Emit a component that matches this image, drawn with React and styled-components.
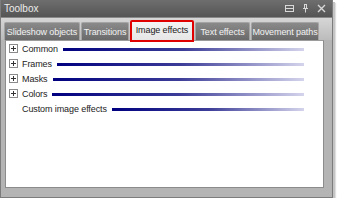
import React from "react";
import styled, { createGlobalStyle } from "styled-components";

const Global = createGlobalStyle`
  html, body { margin: 0; padding: 0; background: #ffffff; }
  body { font-family: "Liberation Sans", Arial, sans-serif; }
`;

const Window = styled.div`
  width: 333px;
  height: 198px;
  box-sizing: border-box;
  background: #a8a8a8;
  border: 1px solid #7c7c7c;
  border-top: none;
  box-shadow: 2px 2px 0 #c4c4c4, 3px 3px 1px #e0e0e0;
  display: flex;
  flex-direction: column;
`;

const TitleBar = styled.div`
  height: 17px;
  flex: none;
  display: flex;
  align-items: center;
  justify-content: space-between;
  padding: 0 6px 0 3px;
  background: linear-gradient(#6e6e6e, #555555);
  color: #ececec;
  font-size: 10px;
  border-bottom: 1px solid #8a8a8a;
`;

const TitleButtons = styled.div`
  display: flex;
  gap: 7px;
  align-items: center;
`;

const TabStrip = styled.div`
  display: flex;
  align-items: flex-end;
  gap: 1px;
  height: 22px;
  flex: none;
  padding: 0 0 0 3px;
  background: linear-gradient(#d6d6d6, #bcbcbc);
`;

const Tab = styled.div`
  box-sizing: border-box;
  width: ${(p) => p.$w}px;
  height: ${(p) => (p.$active ? 22 : 18)}px;
  display: flex;
  align-items: center;
  justify-content: center;
  font-size: 9px;
  letter-spacing: -0.1px;
  white-space: nowrap;
  color: ${(p) => (p.$active ? "#202020" : "#f2f2f2")};
  background: ${(p) =>
    p.$active ? "linear-gradient(#f4f4f4, #e6e6e6)" : "linear-gradient(#8a8a8a, #6a6a6a)"};
  border: ${(p) => (p.$active ? "2px solid #e00000" : "1px solid #a4a4a4")};
  border-bottom: ${(p) => (p.$active ? "2px solid #e00000" : "none")};
  border-radius: 2px 2px 0 0;
  margin-bottom: ${(p) => (p.$active ? "-2px" : "0")};
  padding-bottom: ${(p) => (p.$active ? "3px" : "0")};
  position: relative;
  z-index: ${(p) => (p.$active ? 1 : 0)};
`;

const Body = styled.div`
  flex: 1;
  display: flex;
  padding: 0 8px 9px 4px;
  background: #b4b4b4;
`;

const Content = styled.div`
  flex: 1;
  background: #ffffff;
  border: 1px solid #8c8c8c;
  border-top: 1px solid #9c9c9c;
  padding: 0 0 0 3px;
  display: flex;
  flex-direction: column;
`;

const Row = styled.div`
  height: 15px;
  display: flex;
  align-items: center;
  font-size: 9px;
  letter-spacing: -0.1px;
  color: #222;
  padding-right: 19px;
`;

const Expander = styled.span`
  width: 7px;
  height: 7px;
  border: 1px solid #8a8a8a;
  margin-right: 4px;
  position: relative;
  flex: none;
  visibility: ${(p) => (p.$hidden ? "hidden" : "visible")};
  &::before, &::after {
    content: "";
    position: absolute;
    background: #333;
  }
  &::before { left: 1px; top: 3px; width: 5px; height: 1px; }
  &::after { left: 3px; top: 1px; width: 1px; height: 5px; }
`;

const Label = styled.span`
  white-space: nowrap;
  margin-right: 5px;
`;

const Bar = styled.span`
  flex: 1;
  height: 3px;
  margin-top: 1px;
  background: linear-gradient(to right, #000080, #3c3c98 50%, #d4d4ec);
`;

const Icon = ({ children }) => (
  <svg width="9" height="9" viewBox="0 0 9 9" fill="none" stroke="#d8d8d8" strokeWidth="1">
    {children}
  </svg>
);

const items = [
  { label: "Common" },
  { label: "Frames" },
  { label: "Masks" },
  { label: "Colors" },
  { label: "Custom image effects", leaf: true },
];

const tabs = [
  { t: "Slideshow objects", w: 76 },
  { t: "Transitions", w: 48 },
  { t: "Image effects", w: 64 },
  { t: "Text effects", w: 55 },
  { t: "Movement paths", w: 68 },
];

export default function App() {
  return (
    <>
      <Global />
      <Window>
        <TitleBar>
          <span>Toolbox</span>
          <TitleButtons>
            <Icon>
              <rect x="0.5" y="1.5" width="8" height="6" />
              <line x1="0.5" y1="4.5" x2="8.5" y2="4.5" />
            </Icon>
            <Icon>
              <path d="M3 0.5h3M3.5 0.5v4M5.5 0.5v4M2 4.5h5M4.5 4.5v4" />
            </Icon>
            <Icon>
              <path d="M1 1l7 7M8 1l-7 7" strokeWidth="1.4" />
            </Icon>
          </TitleButtons>
        </TitleBar>
        <TabStrip>
          {tabs.map(({ t, w }) => (
            <Tab key={t} $w={w} $active={t === "Image effects"}>
              {t}
            </Tab>
          ))}
        </TabStrip>
        <Body>
          <Content>
            {items.map((it) => (
              <Row key={it.label}>
                <Expander $hidden={it.leaf} />
                <Label>{it.label}</Label>
                <Bar />
              </Row>
            ))}
          </Content>
        </Body>
      </Window>
    </>
  );
}
